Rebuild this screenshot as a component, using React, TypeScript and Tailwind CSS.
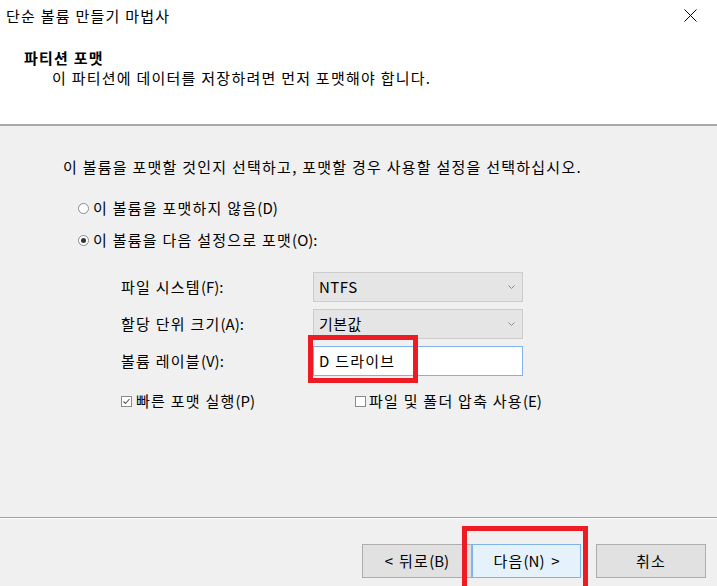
import React from "react";

const Radio = ({ checked }: { checked?: boolean }) => (
  <span className="w-[11px] h-[11px] rounded-full border border-[#8a8a8a] bg-white flex items-center justify-center shrink-0">
    {checked && <span className="w-[5px] h-[5px] rounded-full bg-[#333333]" />}
  </span>
);

const Check = ({ checked }: { checked?: boolean }) => (
  <span className="w-[11px] h-[11px] border border-[#8a8a8a] bg-white flex items-center justify-center shrink-0">
    {checked && (
      <svg width="9" height="9" viewBox="0 0 9 9">
        <path d="M1.5 4.5 L3.5 6.5 L7.5 2" stroke="#555" strokeWidth="1.1" fill="none" />
      </svg>
    )}
  </span>
);

const Chevron = () => (
  <svg width="7" height="4" viewBox="0 0 7 4">
    <path d="M0.5 0.5 L3.5 3.5 L6.5 0.5" stroke="#8a8a8a" strokeWidth="1" fill="none" />
  </svg>
);

// korean text with a tighter latin mnemonic such as (F):
const L = ({ text, k, end = "" }: { text: string; k: string; end?: string }) => (
  <span>
    {text}
    <span className="tracking-[0px]">
      ({k}){end}
    </span>
  </span>
);

const App = () => {
  const rows = [
    { label: "파일 시스템", k: "F", value: "NTFS", kind: "select" },
    { label: "할당 단위 크기", k: "A", value: "기본값", kind: "select" },
    { label: "볼륨 레이블", k: "V", value: "D 드라이브", kind: "input" },
  ];

  return (
    <div className="w-[717px] h-[586px] flex flex-col bg-[#f0f0f0] text-black text-[15px] tracking-[1.25px] font-['Noto_Sans_CJK_KR',sans-serif] overflow-hidden">
      {/* header */}
      <div className="bg-white h-[126px] border-b-2 border-[#a8a8a8] shrink-0">
        <div className="h-[31px] flex items-center justify-between pl-[6px] pr-[20px]">
          <span className="leading-[20px]">단순 볼륨 만들기 마법사</span>
          <svg width="13" height="13" viewBox="0 0 13 13">
            <path d="M0.5 0.5 L12.5 12.5 M12.5 0.5 L0.5 12.5" stroke="#000" strokeWidth="1" />
          </svg>
        </div>
        <div className="pl-[24px] mt-[17px] leading-[20px] font-bold">파티션 포맷</div>
        <div className="pl-[52px] leading-[20px]">이 파티션에 데이터를 저장하려면 먼저 포맷해야 합니다.</div>
      </div>

      {/* body */}
      <div className="flex-1 flex flex-col pt-[31px]">
        <div className="pl-[63px] leading-[20px]">
          이 볼륨을 포맷할 것인지 선택하고, 포맷할 경우 사용할 설정을 선택하십시오.
        </div>
        <div className="pl-[78px] mt-[21px] flex items-center gap-[4px] leading-[20px]">
          <Radio />
          <L text="이 볼륨을 포맷하지 않음" k="D" />
        </div>
        <div className="pl-[78px] mt-[12px] flex items-center gap-[4px] leading-[20px]">
          <Radio checked />
          <L text="이 볼륨을 다음 설정으로 포맷" k="O" end=":" />
        </div>

        <div className="pl-[121px] mt-[22px] flex flex-col gap-[7px]">
          {rows.map((r) => (
            <div key={r.label} className="flex items-center h-[30px]">
              <span className="w-[192px] leading-[20px]">
                <L text={r.label} k={r.k} end=":" />
              </span>
              {r.kind === "select" ? (
                <div className="w-[210px] h-[30px] bg-[#e5e5e5] border border-[#cccccc] flex items-center justify-between pl-[5px] pr-[7px]">
                  <span className="leading-[20px] tracking-[0.5px]">{r.value}</span>
                  <Chevron />
                </div>
              ) : (
                <div className="relative w-[210px] h-[30px] bg-white border border-[#7eb4ea] flex items-center pl-[5px]">
                  <span className="leading-[20px]">{r.value}</span>
                  <div className="absolute left-[-6px] top-[-12px] w-[110px] h-[48px] border-[5px] border-[#ed1c24]" />
                </div>
              )}
            </div>
          ))}
        </div>

        <div className="pl-[121px] mt-[15px] flex items-center leading-[20px]">
          <div className="w-[234px] flex items-center gap-[4px]">
            <Check checked />
            <L text="빠른 포맷 실행" k="P" />
          </div>
          <div className="flex items-center gap-[3px]">
            <Check />
            <L text="파일 및 폴더 압축 사용" k="E" />
          </div>
        </div>
      </div>

      {/* footer */}
      <div className="h-[69px] shrink-0 border-t border-[#a0a0a0]">
        <div className="h-px bg-white" />
        <div className="flex pl-[362px] pt-[25px]">
          <button className="w-[110px] h-[34px] bg-[#e1e1e1] border border-[#adadad] leading-[20px]">
            &lt; 뒤로<span className="tracking-[0px]">(B)</span>
          </button>
          <div className="relative">
            <button className="w-[109px] h-[34px] bg-[#e5f1fb] border border-[#7eb4ea] leading-[20px]">
              다음<span className="tracking-[0px]">(N)&nbsp; &gt;</span>
            </button>
            <div className="absolute left-[-10px] top-[-18px] w-[126px] h-[70px] border-[5px] border-b-0 border-[#ed1c24]" />
          </div>
          <button className="ml-[15px] w-[110px] h-[34px] bg-[#e1e1e1] border border-[#adadad] leading-[20px]">
            취소
          </button>
        </div>
      </div>
    </div>
  );
};

export default App;
